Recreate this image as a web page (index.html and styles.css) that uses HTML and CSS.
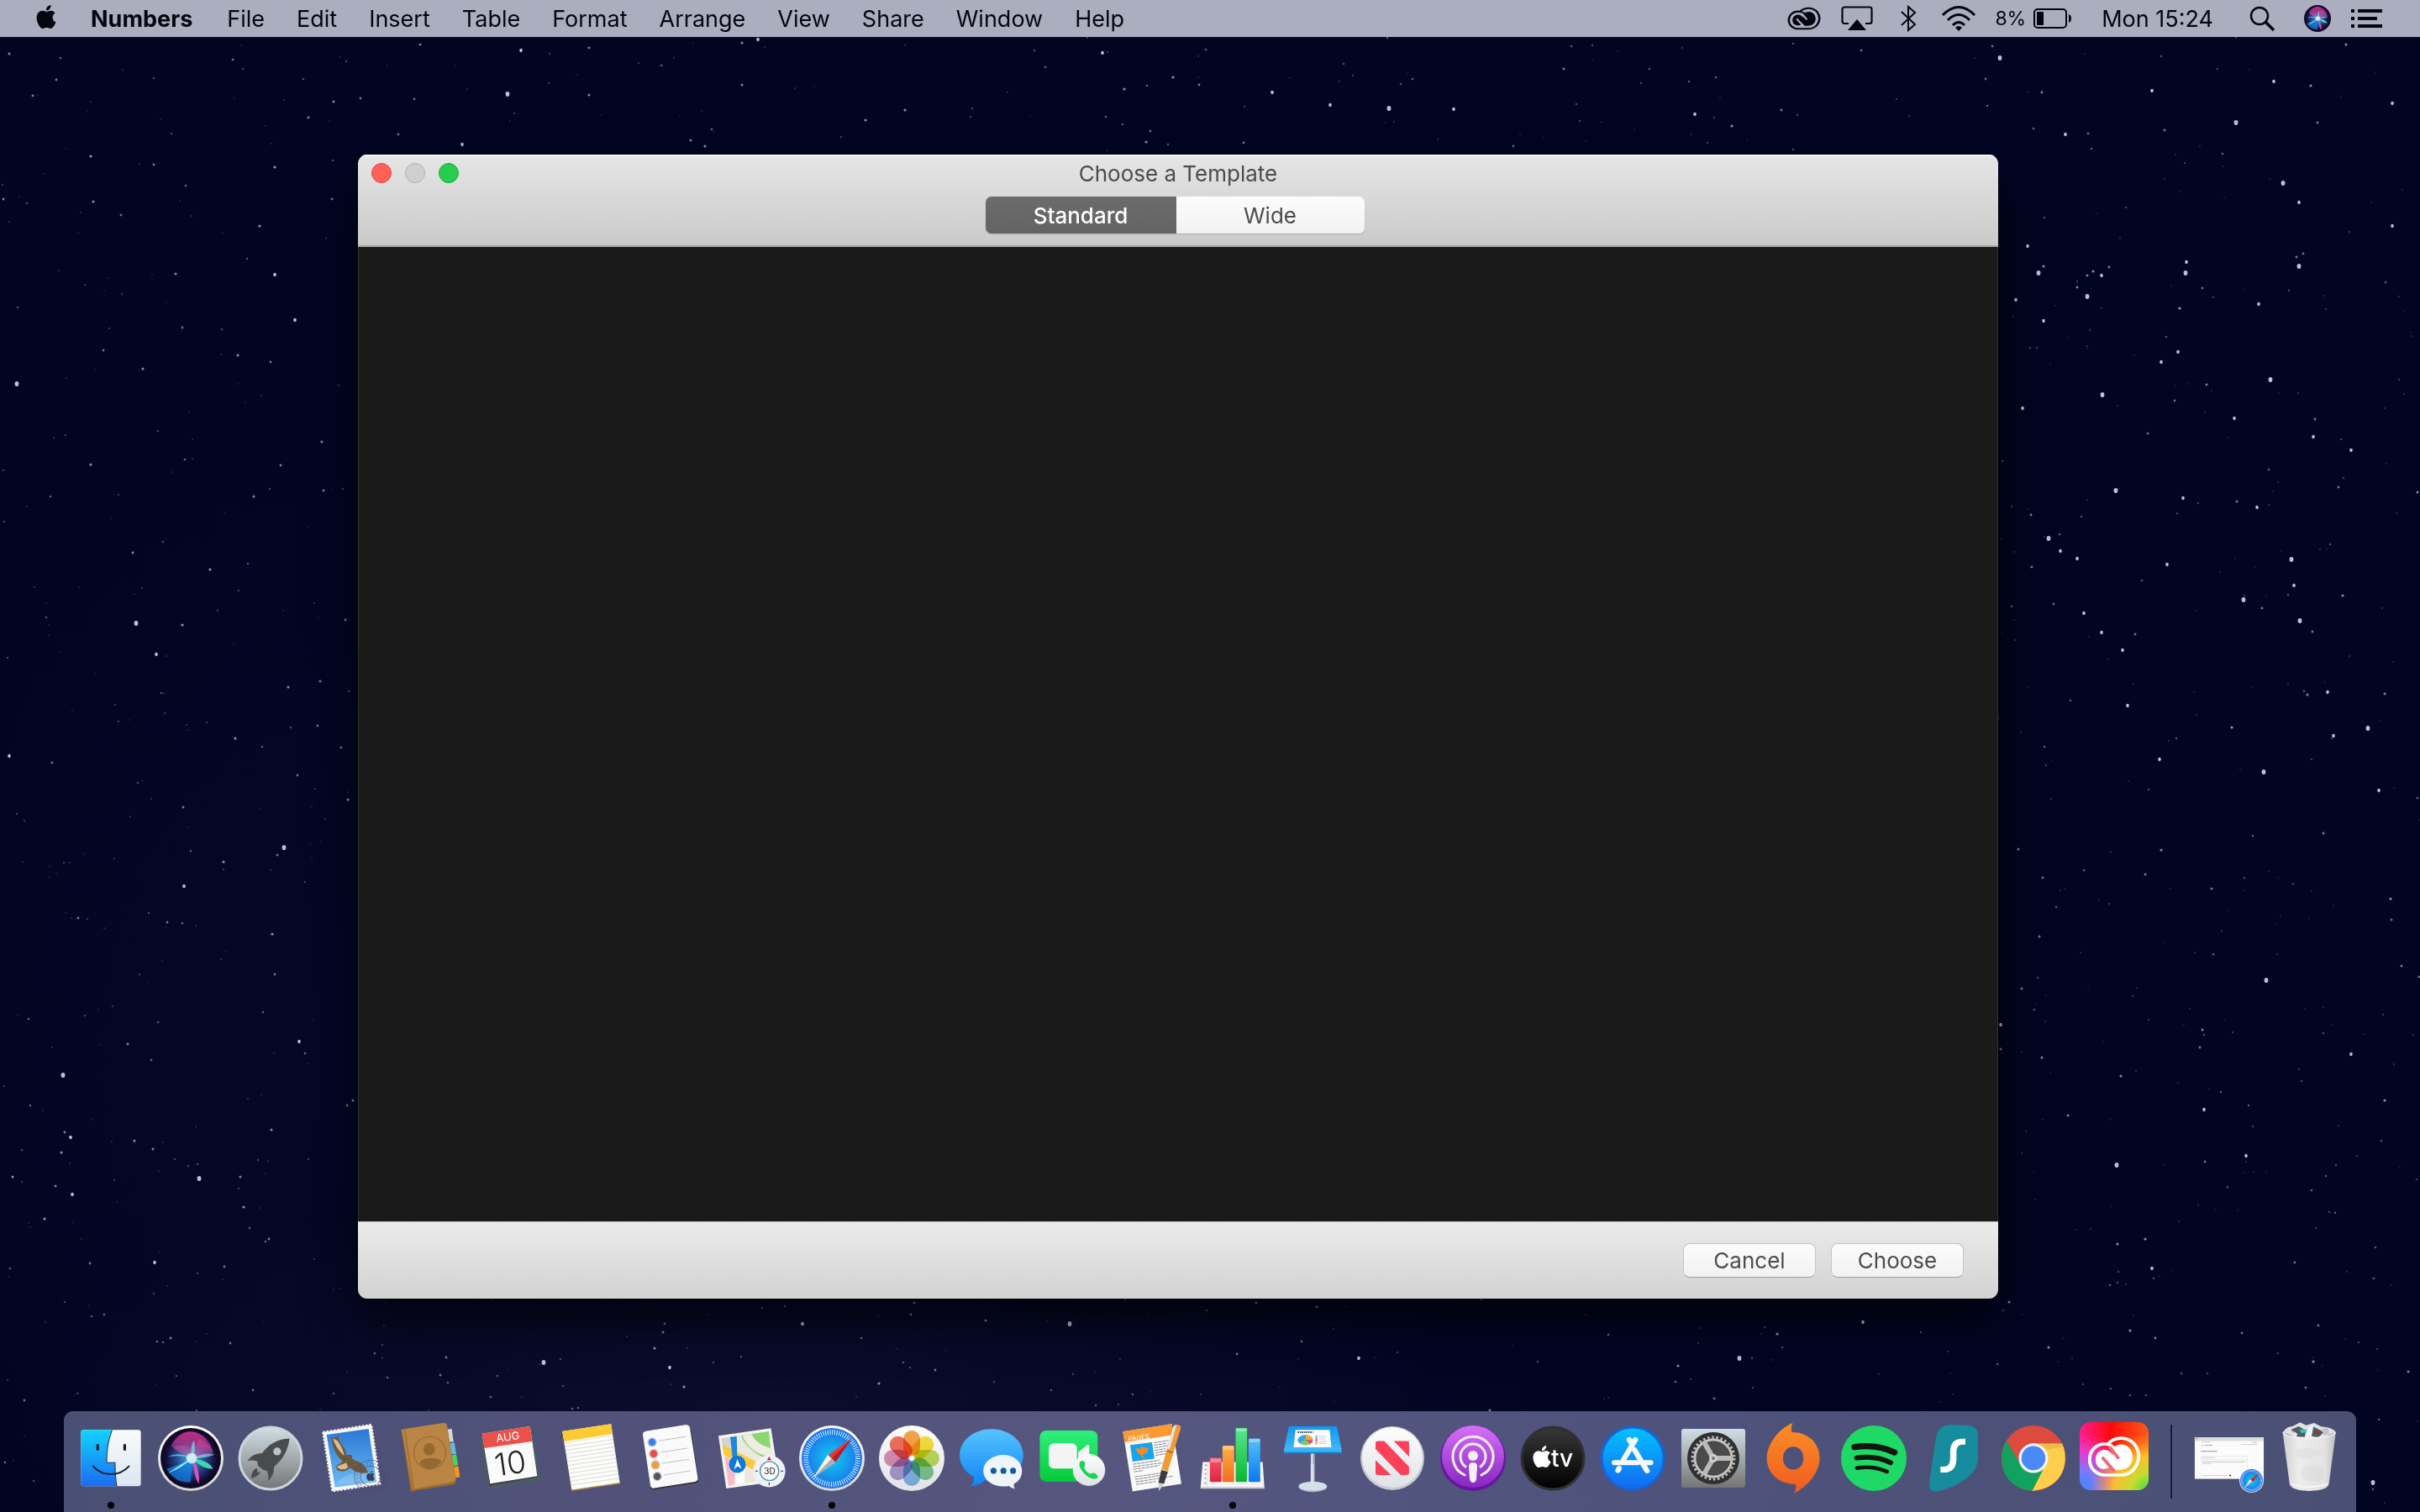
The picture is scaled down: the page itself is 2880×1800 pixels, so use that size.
FILE: index.html
```html
<!DOCTYPE html>
<html lang="en">
<head>
<meta charset="utf-8">
<title>Choose a Template</title>
<link rel="stylesheet" href="styles.css">
</head>
<body>
<svg class="defs" aria-hidden="true">
  <defs>
    <symbol id="apple" viewBox="0 0 24 24"><path fill="currentColor" d="M12.152 6.896c-.948 0-2.415-1.078-3.96-1.04-2.04.027-3.91 1.183-4.961 3.014-2.117 3.675-.546 9.103 1.519 12.09 1.013 1.454 2.208 3.09 3.792 3.039 1.52-.065 2.09-.987 3.935-.987 1.831 0 2.35.987 3.96.948 1.637-.026 2.676-1.48 3.676-2.948 1.156-1.688 1.636-3.325 1.662-3.415-.039-.013-3.182-1.221-3.22-4.857-.026-3.04 2.48-4.494 2.597-4.559-1.429-2.09-3.623-2.324-4.39-2.376-2-.156-3.675 1.09-4.61 1.09zM15.53 3.83c.843-1.012 1.4-2.427 1.245-3.83-1.207.052-2.662.805-3.532 1.818-.78.896-1.454 2.338-1.273 3.714 1.338.104 2.715-.688 3.559-1.701z"/></symbol>
    <symbol id="cloud" viewBox="515 116 180 150" preserveAspectRatio="none">
      <g fill="none" stroke="currentColor" stroke-width="11">
        <path d="M583 148C600 124 645 112 674 148C704 194 678 257 627 257H573C545 257 523 232 523 202C523 170 545 146 573 146C590 146 600 153 610 166"/>
      </g>
      <path fill="currentColor" d="M543 202C543 178 560 166 574 167C586 168 592 174 600 184L603 160C620 140 650 145 662 170C676 205 658 237 628 238H604C598 238 594 233 590 228C580 240 543 240 543 202Z"/>
      <g fill="none" stroke="var(--cut)" stroke-width="11" stroke-linecap="round">
        <path d="M592 160L618 195"/><path d="M568 197L603 240"/>
      </g>
    </symbol>
    <radialGradient id="siriBase"><stop offset="0" stop-color="#48b8e0"/><stop offset=".5" stop-color="#234a92"/><stop offset=".85" stop-color="#160f3c"/><stop offset="1" stop-color="#0d0822"/></radialGradient>
    <linearGradient id="siriTop" x2="0" y2="1"><stop offset="0" stop-color="#c62a86"/><stop offset=".6" stop-color="#b03a90" stop-opacity=".7"/><stop offset="1" stop-color="#7a3ab0" stop-opacity="0"/></linearGradient>
    <symbol id="siri" viewBox="-34 -34 68 68">
      <circle r="34" fill="#120824"/><circle r="32" fill="url(#siriBase)"/>
      <path d="M-22-14C-16-26-8-30 0-30S20-24 25-8C14 2-6-2-22-14Z" fill="url(#siriTop)"/>
      <path d="M-20-12C-8-18 4-12 4 0C-6-4-14-6-20-12ZM4 0C4-14 10-20 8-22C18-18 26-10 25-5Z" fill="#e8579d" opacity=".4"/>
      <path d="M-27 12Q-10 6 2 2L0 27Q-18 28-27 12Z" fill="#1480e0" opacity=".75"/>
      <path d="M-26 15Q-12 7 2 0Q-14-8-26-2Q-10-4 2 0Q-2-14 4-20Q6-10 3 0Q16-7 27-4Q18 0 3 0Z" fill="#9fe9f6" opacity=".6"/>
      <path d="M-26 17Q-12 8 2-1Q-8 10-26 17Z" fill="#8ff4ff"/>
      <path d="M3 1Q20 2 25 12Q12 12 3 1Z" fill="#3fd9a8"/><path d="M3 1Q11 16 9 29Q3 20 3 1Z" fill="#ea4fb5"/>
      <circle cx="1" r="6" fill="#e8fdff" opacity=".8"/>
    </symbol>
    <radialGradient id="safariBlue"><stop offset="0" stop-color="#12cdf0"/><stop offset="1" stop-color="#1b6fe8"/></radialGradient>
    <linearGradient id="rim" x2="0" y2="1"><stop offset="0" stop-color="#fff"/><stop offset="1" stop-color="#d4d4d6"/></linearGradient>
    <symbol id="safari" viewBox="-39 -39 78 78">
      <circle r="39" fill="url(#rim)"/><circle r="36" fill="url(#safariBlue)"/>
      <circle r="31" fill="none" stroke="#d8efff" stroke-width="6" stroke-dasharray="1 1.705"/>
      <path d="M24-24L4 5L-4-4Z" fill="#ee3434"/><path d="M24-24L4 5L0 0Z" fill="#b81d25"/>
      <path d="M-22 23L-5-4L4 5Z" fill="#f4f4f4"/><path d="M-22 23L0 0L4 5Z" fill="#a9adb2"/>
    </symbol>
    <linearGradient id="finderL" x2="0" y2="1"><stop offset="0" stop-color="#13d3fd"/><stop offset="1" stop-color="#1a6df2"/></linearGradient>
    <linearGradient id="finderR" x2="0" y2="1"><stop offset="0" stop-color="#fbfbfc"/><stop offset="1" stop-color="#dbe6f2"/></linearGradient>
    <linearGradient id="steel" x2="0" y2="1"><stop offset="0" stop-color="#cfdfe6"/><stop offset=".6" stop-color="#9ba0a2"/><stop offset="1" stop-color="#747474"/></linearGradient>
    <linearGradient id="sky" x2="0" y2="1"><stop offset="0" stop-color="#2a78d4"/><stop offset="1" stop-color="#6dbbf2"/></linearGradient>
    <linearGradient id="msg" x2="0" y2="1"><stop offset="0" stop-color="#57c4fb"/><stop offset="1" stop-color="#0f84fb"/></linearGradient>
    <linearGradient id="green" x2="0" y2="1"><stop offset="0" stop-color="#2ff07c"/><stop offset="1" stop-color="#06c93a"/></linearGradient>
    <linearGradient id="white" x2="0" y2="1"><stop offset="0" stop-color="#fdfdfd"/><stop offset="1" stop-color="#dfe2e6"/></linearGradient>
    <linearGradient id="barR" x2="0" y2="1"><stop offset="0" stop-color="#f5556a"/><stop offset="1" stop-color="#de2340"/></linearGradient>
    <linearGradient id="barO" x2="0" y2="1"><stop offset="0" stop-color="#fdb346"/><stop offset="1" stop-color="#f46a20"/></linearGradient>
    <linearGradient id="barG" x2="0" y2="1"><stop offset="0" stop-color="#5ae88e"/><stop offset="1" stop-color="#08b62f"/></linearGradient>
    <linearGradient id="barB" x2="0" y2="1"><stop offset="0" stop-color="#55c1fb"/><stop offset="1" stop-color="#0a78f0"/></linearGradient>
    <linearGradient id="key" x2="0" y2="1"><stop offset="0" stop-color="#1196f0"/><stop offset="1" stop-color="#3fb8fa"/></linearGradient>
    <linearGradient id="pod" x2="0" y2="1"><stop offset="0" stop-color="#d670f8"/><stop offset="1" stop-color="#8727c0"/></linearGradient>
    <linearGradient id="tv" x2="0" y2="1"><stop offset="0" stop-color="#383838"/><stop offset="1" stop-color="#000"/></linearGradient>
    <linearGradient id="store" x2="0" y2="1"><stop offset="0" stop-color="#04c3fd"/><stop offset="1" stop-color="#1368f3"/></linearGradient>
    <linearGradient id="origin" x2="0" y2="1"><stop offset="0" stop-color="#fa8f25"/><stop offset="1" stop-color="#f15a22"/></linearGradient>
    <linearGradient id="ccBase" x2="1" y2="0"><stop offset="0" stop-color="#ff1c92"/><stop offset=".45" stop-color="#fb0a0a"/><stop offset="1" stop-color="#ff5a1a"/></linearGradient>
    <radialGradient id="ccBlue" cx="0" cy="1" r=".85"><stop offset="0" stop-color="#2f8dff"/><stop offset=".35" stop-color="#7d78ff"/><stop offset=".7" stop-color="#e840e0" stop-opacity=".75"/><stop offset="1" stop-color="#ff30b0" stop-opacity="0"/></radialGradient>
    <radialGradient id="ccGreen" cx="1" cy="1" r=".85"><stop offset="0" stop-color="#3ddc4a"/><stop offset=".3" stop-color="#c8dc30"/><stop offset=".6" stop-color="#ffc926" stop-opacity=".9"/><stop offset="1" stop-color="#ff8a20" stop-opacity="0"/></radialGradient>
    <linearGradient id="bin" x2="1" y2="0"><stop offset="0" stop-color="#cfcfd1"/><stop offset=".3" stop-color="#ededee"/><stop offset=".8" stop-color="#e2e2e2"/><stop offset="1" stop-color="#bdbdc0"/></linearGradient>
  </defs>
</svg>

<svg class="sky" id="sky-field" viewBox="0 0 2880 1800" preserveAspectRatio="xMidYMid slice" aria-hidden="true"></svg>

<header class="menubar">
  <nav class="menus">
    <button class="menu" aria-label="Apple"><svg class="apple" width="28" height="32"><use href="#apple"/></svg></button>
    <button class="menu menu-app">Numbers</button>
    <button class="menu">File</button>
    <button class="menu">Edit</button>
    <button class="menu">Insert</button>
    <button class="menu">Table</button>
    <button class="menu">Format</button>
    <button class="menu">Arrange</button>
    <button class="menu">View</button>
    <button class="menu">Share</button>
    <button class="menu">Window</button>
    <button class="menu">Help</button>
  </nav>
  <div class="status">
    <button class="menu" aria-label="Creative Cloud"><svg class="cc-small" width="40" height="28"><use href="#cloud"/></svg></button>
    <button class="menu" aria-label="AirPlay"><svg width="38" height="32" viewBox="0 0 38 32"><path d="M9 22H4a2.500 2.500 0 0 1-2.500-2.500V5A2.500 2.500 0 0 1 4 2.500H34A2.500 2.500 0 0 1 36.500 5V19.500A2.500 2.500 0 0 1 34 22H29" fill="none" stroke="currentColor" stroke-width="2.200"/><path d="M19 17L30 30H8Z" fill="currentColor"/></svg></button>
    <button class="menu menu-bluetooth" aria-label="Bluetooth"><svg width="22" height="32" viewBox="0 0 22 32"><path d="M3 8L19 23L11 30V2L19 9L3 24" fill="none" stroke="currentColor" stroke-width="2"/></svg></button>
    <button class="menu" aria-label="Wi-Fi"><svg width="42" height="32" viewBox="0 0 42 32"><g fill="none" stroke="currentColor" stroke-width="3"><path d="M2 12Q21-7 40 12"/><path d="M8 18Q21 5 34 18"/><path d="M14 24Q21 17 28 24"/></g><path d="M17 27Q21 23 25 27L21 31Z" fill="currentColor"/></svg></button>
    <button class="menu menu-battery">8%<svg width="48" height="26" viewBox="0 0 48 26"><rect x="2" y="2" width="38" height="22" rx="4" fill="none" stroke="currentColor" stroke-width="2"/><rect x="5" y="5" width="8" height="16" rx="1" fill="currentColor"/><path d="M43 8Q46 9 46 13T43 18Z" fill="currentColor"/></svg></button>
    <button class="menu menu-clock">Mon 15:24</button>
    <button class="menu menu-search" aria-label="Search"><svg width="32" height="32" viewBox="0 0 32 32"><circle cx="12" cy="13" r="10" fill="none" stroke="currentColor" stroke-width="2.500"/><path d="M19 20L29 30" stroke="currentColor" stroke-width="3.500"/></svg></button>
    <button class="menu" aria-label="Siri"><svg width="32" height="32"><use href="#siri"/></svg></button>
    <button class="menu menu-list" aria-label="Notification Centre"><svg width="37" height="22" viewBox="0 0 37 22"><path d="M0 2H4M0 11H4M0 20H4M8 2H37M8 11H31M8 20H37" stroke="currentColor" stroke-width="4"/></svg></button>
  </div>
</header>

<main class="window">
  <header class="titlebar">
    <div class="lights">
      <button class="light light-close" aria-label="Close"></button>
      <button class="light light-off" aria-label="Minimise" disabled></button>
      <button class="light light-zoom" aria-label="Zoom"></button>
    </div>
    <h1 class="title">Choose a Template</h1>
    <div class="segments">
      <button class="segment segment-on" aria-pressed="true">Standard</button>
      <button class="segment" aria-pressed="false">Wide</button>
    </div>
  </header>
  <section class="gallery"></section>
  <footer class="actions">
    <button class="action">Cancel</button>
    <button class="action">Choose</button>
  </footer>
</main>

<nav class="dock">
  <button class="app app-open" aria-label="Finder"><svg viewBox="0 0 96 120"><g transform="matrix(.357 0 0 .333 -23.800 -10)"><rect x="101" y="97" width="200" height="201" rx="9" fill="url(#finderR)"/><path d="M205 97H110Q101 97 101 106V289Q101 298 110 298H221Q215 270 215 214H187Q186 150 205 97Z" fill="url(#finderL)"/><path d="M205 97Q186 150 187 214H215Q215 270 221 298" fill="none" stroke="#173b63" stroke-width="3"/><path d="M157 152V167M247 152V167" stroke="#15202c" stroke-width="9" stroke-linecap="round"/><path d="M142 227Q165 255 201 255T261 227" fill="none" stroke="#15202c" stroke-width="6" stroke-linecap="round"/></g></svg></button>
  <button class="app" aria-label="Siri"><svg viewBox="0 0 96 120"><circle cx="48" cy="56" r="39" fill="url(#rim)"/><use href="#siri" x="12" y="20" width="72" height="72"/></svg></button>
  <button class="app" aria-label="Launchpad"><svg viewBox="0 0 96 120"><circle cx="48" cy="56" r="37" fill="url(#steel)" stroke="#c9d6dc" stroke-width="3"/><g transform="matrix(.357 0 0 .333 -214 -10)"><path d="M797 128Q740 130 706 180Q672 182 657 207Q675 204 690 210L692 226L710 240L722 243Q730 262 724 280Q745 265 746 228Q790 190 797 128Z" fill="#484c4f"/><ellipse cx="756" cy="174" rx="13" ry="14" fill="#b9c3c8"/><path d="M689 233Q671 240 669 269Q692 265 701 246L690 250Z" fill="#484c4f"/></g></svg></button>
  <button class="app" aria-label="Mail"><svg viewBox="0 0 96 120"><g transform="matrix(.357 0 0 .333 -309.400 -10)"><path d="M907 105L1068 78L1097 290L938 316Z" fill="#f6f6f6" stroke="#f6f6f6" stroke-width="7" stroke-dasharray="7 5"/><path d="M919 114L1059 93L1085 283L947 302Z" fill="url(#sky)"/><path d="M935 122L948 124L958 118L960 135Q985 165 985 188Q1000 182 1005 192Q1000 200 1013 206Q1045 215 1058 249L1040 254Q1010 246 998 232Q980 252 954 240L950 225Q975 214 970 206Q940 180 935 122Z" fill="#70583f"/><path d="M940 128L955 135Q975 165 978 190Q950 165 940 128ZM952 228L985 214L990 232Q970 246 952 228Z" fill="#d9bd90"/><path d="M945 295Q990 235 1080 255L1083 281Z" fill="#b8dcf5" opacity=".3"/><g fill="none" stroke="#404a70" opacity=".6"><ellipse cx="1066" cy="262" rx="54" ry="57" stroke-width="3"/><ellipse cx="1066" cy="262" rx="34" ry="36" stroke-width="3"/><ellipse cx="1066" cy="262" rx="44" ry="46" stroke-width="8" stroke-dasharray="6 7" opacity=".5"/></g></g><use class="stamp" href="#apple" x="65" y="71" width="12" height="12"/></svg></button>
  <button class="app" aria-label="Contacts"><svg viewBox="0 0 96 120"><g transform="matrix(.357 0 0 .333 -404.700 -10)"><path d="M1323 95L1337 92L1343 140H1328Z" fill="#d4d6dc"/><path d="M1330 145L1346 142L1352 183H1336Z" fill="#58bfe9"/><path d="M1337 187L1352 184L1358 223L1340 227Z" fill="#49d35e"/><path d="M1342 230L1359 226L1364 266L1345 268Z" fill="#f2991c"/><path d="M1169 95L1310 72Q1319 71 1321 80L1351 278Q1352 290 1342 292L1200 317Z" fill="#9a6a2c"/><path d="M1169 95L1310 72Q1319 71 1321 80L1349 272Q1350 281 1342 283L1206 309Z" fill="#b98444"/><path d="M1180 94L1210 310" stroke="#93672f" stroke-width="3"/><ellipse cx="1264" cy="179" rx="53" ry="58" fill="#b98444" stroke="#936932" stroke-width="3"/><ellipse cx="1262" cy="166" rx="19" ry="22" fill="#936932"/><path d="M1229 218Q1232 198 1268 198Q1298 198 1303 210Q1268 258 1229 218Z" fill="#936932"/></g></svg></button>
  <button class="app" aria-label="Calendar"><svg viewBox="0 0 96 120"><g transform="matrix(.357 0 0 .333 -499 -10)"><path d="M1429 123L1602 92L1633 280L1454 310Z" fill="#4d5b66"/><path d="M1436 110L1590 86L1622 266L1461 298Z" fill="#3e444a"/><path d="M1436 110L1596 84L1620 262L1463 289Z" fill="#fbfbfb"/><path d="M1436 110L1596 84L1603 138L1444 162Z" fill="#ea5149"/></g><text class="cal-month" transform="translate(45 35) rotate(-8)">AUG</text><text class="cal-day" transform="translate(49 75) rotate(-8)">10</text></svg></button>
  <button class="app" aria-label="Notes"><svg viewBox="0 0 96 120"><g transform="matrix(.357 0 0 .333 -37 -10)"><path d="M141 102L303 76L333 290L172 315Z" fill="#a98638"/><path d="M141 102L303 76L332 285L172 311Z" fill="#fcfcfa"/><path d="M140 102L303 76L308 111L147 138Z" fill="#fccb34"/><path d="M148 143L308 116" stroke="#a59667" stroke-width="1.500" stroke-dasharray="3 3"/><path d="M150 157L310 131M152 170L312 144M154 183L314 158M156 197L316 171M158 210L318 185M160 224L320 199M162 238L322 213M164 252L324 227M166 266L326 241M168 280L328 255M170 294L330 270" stroke="#cbcbc8" stroke-width="2"/></g></svg></button>
  <button class="app" aria-label="Reminders"><svg viewBox="0 0 96 120"><g transform="matrix(.357 0 0 .333 -131.600 -10)"><path d="M407 110L433 301Q436 312 446 310L584 287Q595 284 593 275L568 92Z" fill="#2d2d31"/><path d="M418 101L549 79Q562 77 565 90L591 268Q593 279 582 282L447 305Q435 307 433 296L408 116Q406 104 418 101Z" fill="#fafafa"/><g stroke="#c9ccd0" stroke-width="4"><ellipse cx="439" cy="141" rx="14" ry="15" fill="#3880f2"/><ellipse cx="444" cy="182" rx="14" ry="15" fill="#ea4c43"/><ellipse cx="450" cy="222" rx="14" ry="15" fill="#f19b3b"/><ellipse cx="456" cy="263" rx="14" ry="15" fill="#54585e"/></g><path d="M461 136L551 121M467 177L557 162M472 217L563 202M478 258L568 243" stroke="#a7a7a9" stroke-width="2"/></g></svg></button>
  <button class="app" aria-label="Maps"><svg viewBox="0 0 96 120"><g transform="matrix(.357 0 0 .333 -226.900 -10)"><path d="M658 118L833 91L861 280L684 306Z" fill="#f6f4ef"/><path d="M667 127L826 102L850 272L691 296Z" fill="#ece8df"/><path d="M667 127L697 122L702 185L674 170Z" fill="#d6d4cc"/><path d="M734 117Q745 160 815 200L835 198L826 102Z" fill="#8ad670"/><path d="M738 117L768 112Q785 150 832 162L836 195Q760 180 738 117Z" fill="#efece4"/><path d="M672 150L780 208L784 245L676 186Z" fill="#fbc93a"/><path d="M680 190L712 210L710 293L692 296Z" fill="#f8b8c8"/><path d="M716 225L745 232V288H716Z" fill="#fff"/><path d="M697 122L719 119L721 205H706Z" fill="#2086dc"/><ellipse cx="721" cy="220" rx="28" ry="31" fill="#0c78da"/><path d="M721 201L735 236L722 227L710 238Z" fill="#fff"/><ellipse cx="827" cy="245" rx="54" ry="57" fill="#eef1f5"/><ellipse cx="828" cy="244" rx="31" ry="34" fill="#f7f9fa" stroke="#5d95a8" stroke-width="4"/><path d="M827 192L834 205H820Z" fill="#e8141c"/><path d="M781 244H789M866 244H874M827 285V294" stroke="#222" stroke-width="3"/></g><text class="map-mode" x="69" y="75">3D</text></svg></button>
  <button class="app app-open" aria-label="Safari"><svg viewBox="0 0 96 120"><use href="#safari" x="9" y="17" width="78" height="78"/></svg></button>
  <button class="app" aria-label="Photos"><svg viewBox="0 0 96 120"><circle cx="48" cy="56" r="39" fill="url(#white)"/><g class="petals" transform="translate(48 56)"><rect x="-10" y="-33" width="20" height="30" rx="10" fill="#f99a35"/><rect x="-10" y="-33" width="20" height="30" rx="10" fill="#f5dd28" transform="rotate(45)"/><rect x="-10" y="-33" width="20" height="30" rx="10" fill="#bbd84a" transform="rotate(90)"/><rect x="-10" y="-33" width="20" height="30" rx="10" fill="#72c585" transform="rotate(135)"/><rect x="-10" y="-33" width="20" height="30" rx="10" fill="#76b4e4" transform="rotate(180)"/><rect x="-10" y="-33" width="20" height="30" rx="10" fill="#a692cc" transform="rotate(225)"/><rect x="-10" y="-33" width="20" height="30" rx="10" fill="#d885ae" transform="rotate(270)"/><rect x="-10" y="-33" width="20" height="30" rx="10" fill="#f2604c" transform="rotate(315)"/></g><circle cx="48" cy="56" r="2" fill="#fff"/></svg></button>
  <button class="app" aria-label="Messages"><svg viewBox="0 0 96 120"><g transform="matrix(.357 0 0 .333 46.900 -10)"><path d="M0 94C-58 94-106 135-106 187C-106 220-88 248-60 264Q-55 285-70 298Q-40 296-24 278C50 286 106 245 106 187C106 135 58 94 0 94Z" fill="url(#msg)"/><path d="M40 186C5 186-27 210-27 243S5 299 40 299Q50 299 58 297Q66 305 78 308Q72 298 75 290Q102 274 102 243C102 210 74 186 40 186Z" fill="#eef4fb"/><g fill="#1259a5"><ellipse cx="7" cy="243" rx="10" ry="11"/><ellipse cx="40" cy="243" rx="10" ry="11"/><ellipse cx="72" cy="243" rx="10" ry="11"/></g></g></svg></button>
  <button class="app" aria-label="FaceTime"><svg viewBox="0 0 96 120"><g transform="matrix(.357 0 0 .333 -47.700 -10)"><rect x="160" y="99" width="193" height="183" rx="22" fill="url(#green)"/><rect x="190" y="145" width="94" height="90" rx="17" fill="#f3f4f3"/><path d="M288 177L318 151Q325 148 325 156V225L288 205Z" fill="#f3f4f3"/><ellipse cx="324" cy="240" rx="54" ry="57" fill="url(#white)"/><path d="M300 207C312 207 314 222 308 230C310 243 322 253 331 254C338 246 352 252 354 266C345 278 325 272 308 252C290 232 287 212 300 207Z" fill="#1ad553"/></g></svg></button>
  <button class="app" aria-label="Pages"><svg viewBox="0 0 96 120"><g transform="matrix(.357 0 0 .333 -143 -10)"><path d="M438 103L601 76L633 290L470 317Z" fill="#f9f9f9"/><path d="M438 103L601 76L607 115L444 141Z" fill="#fb9a30"/><path d="M462 151L535 141L543 200L470 210Z" fill="#17a3ee"/><path d="M480 160Q497 172 500 155Q510 165 524 160Q520 182 505 184L508 203L497 186Q484 180 480 160Z" fill="#f58b1d"/><path d="M541 143L590 135M542 152L585 145M544 161L590 153M545 170L580 164M546 179L585 172M547 188L580 182M471 220L560 205M472 229L570 214M473 238L560 224M475 247L505 242M478 265L590 247M479 274L560 260M481 283L605 262M482 292L550 281" stroke="#8b8b90" stroke-width="3" stroke-dasharray="12 2"/><path d="M606 84Q612 72 629 82L631 90L588 244L566 238Z" fill="#f39a35"/><path d="M606 84L586 164L594 166L616 80Z" fill="#dcecf5"/><path d="M586 172L604 178" stroke="#8c5a1e" stroke-width="4"/><path d="M566 240L588 246L575 290L556 286Z" fill="#3c3c40"/><path d="M556 286L574 291L558 315Z" fill="#c6d3dc"/></g><text class="pages-label" transform="translate(20 36) rotate(-8)">PAGES</text></svg></button>
  <button class="app app-open" aria-label="Numbers"><svg viewBox="0 0 96 120"><g transform="matrix(.357 0 0 .333 -238 -10)"><path d="M701 212H901L907 306H694Z" fill="#f5f5f7"/><path d="M694 301H907V307H694Z" fill="#c9c9cf"/><path d="M720 214L716 300" stroke="#d5d5da" stroke-width="2"/><path d="M709 223H715M708 239H714M708 254H714M707 270H713M706 287H713" stroke="#8a8a90" stroke-width="4"/><rect x="725" y="197" width="39" height="86" rx="4" fill="url(#barR)"/><rect x="767" y="153" width="39" height="130" rx="4" fill="url(#barO)"/><rect x="811" y="90" width="38" height="193" rx="4" fill="url(#barG)"/><rect x="854" y="128" width="39" height="155" rx="4" fill="url(#barB)"/><path d="M727 199H762V213H727ZM769 155H804V168H769ZM813 92H847V102H813ZM856 130H891V141H856Z" fill="#fff" opacity=".3"/></g></svg></button>
  <button class="app" aria-label="Keynote"><svg viewBox="0 0 96 120"><g transform="matrix(.357 0 0 .333 -333.600 -10)"><rect x="1063" y="176" width="13" height="124" fill="#d0d4de"/><path d="M1072 176H1077V298H1072Z" fill="#8d92a5"/><ellipse cx="1070" cy="300" rx="47" ry="19" fill="#a9b9cb"/><ellipse cx="1070" cy="298" rx="47" ry="16" fill="#d3e0ea"/><rect x="1063" y="220" width="10" height="78" fill="#dfe1e7"/><path d="M990 84H1150L1166 168H974Z" fill="url(#key)"/><path d="M974 168H1166V181H974Z" fill="#36b0f2"/><path d="M974 177H1166V181H974Z" fill="#0f6fc0"/><path d="M1012 97H1126L1132 159H1006Z" fill="#fafafa"/><ellipse cx="1045" cy="133" rx="25" ry="18" fill="#30a6f3"/><path d="M1045 133L1047 115Q1070 117 1070 133Z" fill="#f3ab30"/><path d="M1045 133H1070Q1068 145 1060 148Z" fill="#ee4b72"/><path d="M1045 133L1062 147Q1040 156 1024 143Z" fill="#77d353"/><path d="M1079 117H1085V127H1079Z" fill="#45c6ee"/><path d="M1079 127H1085V139H1079Z" fill="#ec55ac"/><path d="M1079 139H1085V150H1079Z" fill="#f4b63b"/><path d="M1089 120H1115M1089 129H1110M1089 138H1115M1089 146H1115" stroke="#c8ced8" stroke-width="3"/><path d="M1019 105H1070" stroke="#55606c" stroke-width="6" stroke-dasharray="5 2"/></g></svg></button>
  <button class="app" aria-label="News"><svg viewBox="0 0 96 120"><circle cx="48" cy="56" r="38" fill="#c5c9cf"/><circle cx="48" cy="55" r="36" fill="url(#white)"/><g transform="matrix(.357 0 0 .333 -429.700 -10)" fill="#fc4059"><path d="M1282 145Q1282 137 1290 137H1311L1394 229V250Q1394 258 1386 258H1366L1282 165Z"/><path d="M1343 137H1388Q1394 137 1394 144V193Z"/><path d="M1282 205L1334 258H1290Q1282 258 1282 250Z"/></g></svg></button>
  <button class="app" aria-label="Podcasts"><svg viewBox="0 0 96 120"><circle cx="48" cy="56" r="39" fill="#6417a0"/><circle cx="48" cy="54" r="37" fill="url(#pod)"/><g fill="none" stroke="#f6effa" stroke-width="3" stroke-linecap="round"><path d="M38 76A24 24 0 1 1 58 76"/><path d="M39 66A15 15 0 1 1 57 66"/></g><circle cx="48" cy="53" r="6" fill="#f6effa"/><path d="M43 66Q43 61 48 61T53 66L52 81Q51 85 48 85T44 81Z" fill="#f6effa"/></svg></button>
  <button class="app" aria-label="TV"><svg viewBox="0 0 96 120"><circle cx="48" cy="56" r="37" fill="url(#tv)" stroke="#303032" stroke-width="3"/><use class="tv-apple" href="#apple" x="22" y="41" width="26" height="26"/><text class="tv-label" x="46" y="66">tv</text></svg></button>
  <button class="app" aria-label="App Store"><svg viewBox="0 0 96 120"><circle cx="48" cy="56" r="37" fill="url(#store)" stroke="#1266dc" stroke-width="3"/><g transform="matrix(.357 0 0 .333 -156.200 -10)" stroke="#f4f8fc" stroke-width="18" stroke-linecap="round"><path d="M581 132L540 206M561 132L569 146M578 168L620 243M511 214H589M611 214H632M527 234L523 242"/></g></svg></button>
  <button class="app" aria-label="System Preferences"><svg viewBox="0 0 96 120"><rect x="10" y="21" width="76" height="70" rx="3" fill="url(#steel)"/><circle cx="48" cy="56" r="31" fill="#303032"/><circle cx="48" cy="56" r="22" fill="none" stroke="#c8c8c6" stroke-width="3"/><circle cx="48" cy="56" r="24" fill="none" stroke="#b9b9b7" stroke-width="5" stroke-dasharray="2.500 2.526"/><circle cx="48" cy="56" r="20" fill="#4a4a4a"/><g stroke="#babab8" stroke-width="6"><path d="M48 56H70M48 56L37 37M48 56L37 75"/></g><circle cx="48" cy="56" r="5" fill="#cfcfd0"/><circle cx="48" cy="56" r="2" fill="#777"/></svg></button>
  <button class="app" aria-label="Origin"><svg viewBox="0 0 96 120"><path transform="matrix(.357 0 0 .333 -346 -10)" fill-rule="evenodd" fill="url(#origin)" d="M1102 72Q1095 88 1099 105C1155 105 1192 145 1192 198C1192 250 1150 300 1106 324Q1116 308 1112 291C1055 291 1016 250 1016 198C1016 145 1060 90 1102 72ZM1104 157C1084 157 1070 175 1070 198S1084 239 1104 239S1138 221 1138 198S1124 157 1104 157Z"/></svg></button>
  <button class="app" aria-label="Spotify"><svg viewBox="0 0 96 120"><circle cx="48" cy="56" r="39" fill="#1ed965"/><g transform="matrix(.357 0 0 .333 -442 -10)" fill="none" stroke="#12160f" stroke-linecap="round"><path stroke-width="22" d="M1309 158Q1382 147 1441 177"/><path stroke-width="18" d="M1316 197Q1380 187 1428 214"/><path stroke-width="14" d="M1317 233Q1370 224 1416 246"/></g></svg></button>
  <button class="app" aria-label="Surfshark"><svg viewBox="0 0 96 120"><g transform="matrix(.357 0 0 .333 23 -10)"><path d="M10 130C15 95 30 80 60 79L115 80Q151 82 151 115V195C151 235 130 260 92 285C60 305 25 315 5 317C-12 315-12 295-10 280Z" fill="#178c9e"/><path d="M109 139H97Q69 141 69 175V200Q68 239 37 239H26" fill="none" stroke="#fff" stroke-width="21"/></g></svg></button>
  <button class="app" aria-label="Chrome"><svg viewBox="0 0 96 120"><g transform="matrix(.357 0 0 .333 -72 -10)"><ellipse cx="336" cy="198" rx="107" ry="117" fill="#dd4b3e"/><path d="M246 136C215 190 224 305 332 315L375 225L288 212Z" fill="#12a15f"/><path d="M336 146H432C455 200 445 305 332 315L382 210Z" fill="#ffce4d"/><path d="M336 146H432L436 158L383 168Z" fill="#d8a634" opacity=".4"/><ellipse cx="336" cy="198" rx="49" ry="53" fill="#f4f4f4"/><ellipse cx="336" cy="198" rx="40" ry="43" fill="#4a8af4"/></g></svg></button>
  <button class="app" aria-label="Creative Cloud"><svg class="cc-large" viewBox="0 0 96 120"><g><rect x="7" y="13" width="82" height="81" rx="13" fill="url(#ccBase)"/><rect x="7" y="13" width="82" height="81" rx="13" fill="url(#ccBlue)"/><rect x="7" y="13" width="82" height="81" rx="13" fill="url(#ccGreen)"/></g><use href="#cloud" x="16" y="29" width="64" height="50"/></svg></button>
  <span class="divider"></span>
  <button class="app" aria-label="Minimised window"><svg viewBox="0 0 96 120"><g transform="matrix(.357 0 0 .333 -305.800 -10)"><rect x="876" y="124" width="230" height="148" fill="#fbfbfb"/><path d="M876 124H1106V137H876Z" fill="#dcdcde"/><path d="M880 128H886" stroke="#ea6b62" stroke-width="3"/><path d="M900 140H927M1066 142H1085M1030 149H1085" stroke="#b9b9bd" stroke-width="2"/><path d="M908 152H935" stroke="#7eaee8" stroke-width="3"/><path d="M901 150V155" stroke="#e88" stroke-width="3"/><path d="M897 173H950" stroke="#9c9ca0" stroke-width="4" stroke-dasharray="5 1"/><path d="M897 191H1051V203H897ZM897 209H1051V255" fill="none" stroke="#e2e2e4" stroke-width="2"/><path d="M901 196H944M901 212H1043M901 218H930M901 260H985" stroke="#aaaaae" stroke-width="2" stroke-dasharray="4 1"/><path d="M991 260H997" stroke="#222" stroke-width="4"/></g><use href="#safari" x="60" y="68" width="29" height="29"/></svg></button>
  <button class="app" aria-label="Trash"><svg viewBox="0 0 96 120"><g transform="matrix(.357 0 0 .333 -401.800 -10)"><path d="M1172 106Q1185 84 1205 84L1230 70L1250 80L1277 72L1300 85Q1340 88 1349 106L1300 125H1220Z" fill="#dfe0e2"/><path d="M1200 96L1225 84L1250 100L1245 122H1220ZM1272 84L1310 105L1290 124L1262 118Z" fill="#555963"/><path d="M1228 97L1252 94L1250 106L1235 108Z" fill="#2ecbc6"/><path d="M1255 92L1276 74L1268 122H1250ZM1205 100L1222 112L1216 120Z" fill="#f5f5f5"/><path d="M1282 95L1300 104L1296 112L1278 108Z" fill="#7e4538"/><path d="M1300 96L1322 86L1327 108L1312 118Z" fill="#c5c5c9"/><path d="M1172 106C1190 132 1330 132 1349 106L1326 290Q1322 314 1260 315Q1200 314 1195 290Z" fill="url(#bin)"/><path d="M1172 106C1190 132 1330 132 1349 106" fill="none" stroke="#f7f7f8" stroke-width="4"/><path d="M1215 170Q1250 150 1300 175Q1270 210 1220 195ZM1240 230Q1280 215 1310 240L1300 280Q1250 290 1230 260Z" fill="#cdcccc" opacity=".25"/><path d="M1200 290Q1260 312 1322 290" fill="none" stroke="#fff" stroke-width="5" opacity=".7"/></g></svg></button>
</nav>
<script src="stars.js"></script>
</body>
</html>
```
FILE: styles.css
```css
* { box-sizing: border-box; }

html, body { height: 100%; }

body {
  margin: 0;
  display: flex;
  flex-direction: column;
  justify-content: space-between;
  overflow: hidden;
  position: relative;
  font-family: Inter, "Liberation Sans", sans-serif;
  background:
    radial-gradient(ellipse 900px 300px at 32% 94%, #17133680, #17133600),
    radial-gradient(ellipse 500px 700px at 14% 70%, #0b0b2c60, #0b0b2c00),
    #010522;
}

button {
  margin: 0;
  padding: 0;
  border: 0;
  background: none;
  font: inherit;
  color: inherit;
}

.defs { position: absolute; width: 0; height: 0; }

.sky { position: absolute; inset: 0; width: 100%; height: 100%; }

/* Menu bar */
.menubar {
  position: relative;
  display: flex;
  justify-content: space-between;
  height: 44px;
  padding: 0 45px 0 41px;
  background: #abaebf;
  color: #04050f;
  font-size: 27px;
}

.menus, .status { display: flex; align-items: center; }
.menus { gap: 38px; }
.status { gap: 28px; }
.menu { display: flex; align-items: center; height: 44px; }
.menu-app { margin: 0 3px 0 1px; font-weight: 700; }
.apple { margin-top: -4px; }
.cc-small { --cut: #abaebf; margin-right: -4px; }
.menu-bluetooth { margin-left: 3px; }
.menu-battery { gap: 8px; margin-left: -6px; font-size: 23px; }
.menu-clock { margin: 0 15px 0 6px; }
.menu-search { margin-right: 5px; }
.menu-list { margin-left: -4px; }

/* Template chooser */
.window {
  position: absolute;
  top: 184px;
  right: 502px;
  bottom: 254px;
  left: 426px;
  display: flex;
  flex-direction: column;
  overflow: hidden;
  border-radius: 11px;
  background: #1a1a1a;
  box-shadow: 0 24px 60px rgba(0, 0, 0, .7), 0 0 2px #000;
  color: #4c4c4c;
  font-size: 26px;
}

.titlebar {
  position: relative;
  display: flex;
  flex-direction: column;
  align-items: center;
  height: 110px;
  padding-top: 8px;
  border-bottom: 2px solid #a6a6a6;
  background: linear-gradient(#e6e6e6, #cacaca);
  box-shadow: inset 0 2px #f5f5f5;
}

.lights {
  position: absolute;
  top: 10px;
  left: 16px;
  display: flex;
  gap: 16px;
}

.light { width: 24px; height: 24px; border: 1px solid; border-radius: 50%; }
.light-close { background: #ff6058; border-color: #e2463f; }
.light-off { background: #cfcfcf; border-color: #b0b0b0; }
.light-zoom { background: #28cd4f; border-color: #16b13a; }

.title { margin: 0 0 12px; font-size: 26px; font-weight: 400; line-height: 30px; }

.segments {
  display: flex;
  margin-right: 8px;
  border-radius: 7px;
  box-shadow: 0 1px 1px #aaa;
}

.segment {
  width: 224px;
  height: 44px;
  border-radius: 0 7px 7px 0;
  background: linear-gradient(#fcfcfc, #f2f2f2);
}

.segment-on {
  width: 227px;
  border-radius: 7px 0 0 7px;
  background: linear-gradient(#6c6c6c, #636363);
  color: #fff;
  font-weight: 500;
}

.gallery { flex: 1; border: solid #333; border-width: 0 1px; }

.actions {
  display: flex;
  align-items: center;
  justify-content: flex-end;
  gap: 18px;
  height: 92px;
  padding-right: 41px;
  border-top: 1px solid #c4c4c4;
  background: linear-gradient(#ebebeb, #d2d2d2);
}

.action {
  width: 158px;
  height: 41px;
  border: 1px solid #c6c6c6;
  border-bottom-color: #a2a2a2;
  border-radius: 8px;
  background: linear-gradient(#fcfcfc, #f2f2f2);
}

/* Dock */
.dock {
  position: relative;
  display: grid;
  grid-template-columns: repeat(26, 1fr) 42px repeat(2, 1fr);
  height: 120px;
  margin: 0 76px;
  padding: 0 8px;
  border-radius: 11px 11px 0 0;
  background: linear-gradient(90deg, #4a5074, #51527a 25%, #55577f 45%, #4f527b 70%, #4a5074);
}

.app { position: relative; display: flex; justify-content: center; min-width: 0; }
.app svg { flex: none; width: 96px; height: 120px; }

.app-open::after {
  content: "";
  position: absolute;
  bottom: 4px;
  left: calc(50% - 4px);
  width: 8px;
  height: 8px;
  border-radius: 50%;
  background: #000;
}

.divider { width: 2px; height: 88px; margin: 16px auto; background: #161a42; }

.cc-large { color: #fff; --cut: #ee6a78; }
.stamp { color: #34405c; }
.tv-apple { color: #fff; }
.tv-label { font-size: 28px; font-weight: 500; fill: #fff; }
.cal-month { font-size: 13px; text-anchor: middle; fill: #fff; }
.cal-day { font-size: 37px; font-weight: 300; text-anchor: middle; fill: #222; }
.map-mode { font-size: 10px; text-anchor: middle; fill: #222; }
.pages-label { font-size: 8px; fill: #fff; }
.petals rect { mix-blend-mode: multiply; opacity: .9; }
```
FILE: stars.js
```js
// Night sky: placed bright stars plus an even, seeded scatter of faint ones.
const bright = [
  [2380,69],[2561,108],[2706,97],[2661,146],[2458,160],[2847,123],[2717,218],[2736,241],[2847,269],
  [2426,325],[2413,293],[2501,328],[2484,353],[2399,357],[2432,382],[2601,325],[2602,312],[2688,362],
  [2736,317],[2572,431],[2592,419],[2702,452],[2659,498],[2407,486],[2502,470],[2753,520],[2798,536],
  [2518,584],[2598,593],[2686,604],[2438,641],[2452,656],[2472,665],[2727,666],[2730,697],[2579,672],
  [2670,714],[2480,730],[2501,753],[2737,739],[2526,774],[2770,824],[2818,867],[2570,904],[2777,876],
  [2694,919],[2532,840],[2831,941],[604,112],[1514,110],[2017,136],[1653,129],[1730,130],[1583,125],
  [20,457],[327,327],[351,381],[162,742],[186,779],[2381,1220],[2697,1167],[2623,1321],[2673,1376],
  [2519,1387],[2798,1255],[2561,1510],[75,1280],[86,1422],[84,1354],[237,1403],[184,1503],[356,1240],
  [338,1009],[219,1055],[11,900],[647,1622],[797,1628],[1617,1617],[2070,1617],[2217,1574],[955,1576],
  [1273,1576],[550,172],[902,47],[2824,1765],[620,60],[1312,63]
];
const field = document.getElementById("sky-field");

function star(x, y, rx, ry, opacity, fill) {
  const dot = document.createElementNS("http://www.w3.org/2000/svg", "ellipse");
  dot.setAttribute("cx", x);
  dot.setAttribute("cy", y);
  dot.setAttribute("rx", rx);
  dot.setAttribute("ry", ry);
  dot.setAttribute("opacity", opacity);
  dot.setAttribute("fill", fill);
  field.appendChild(dot);
}

let seed = 7;
function random() {
  seed = (seed * 16807) % 2147483647;
  return seed / 2147483647;
}

for (let i = 0; i < 2000; i++) {
  const level = random() ** 2;
  const r = 1 + level * 0.6;
  star(Math.round(random() * 2880), Math.round(random() * 1800), r, r, 0.15 + level * 0.65, "#b8bce0");
}
bright.forEach(([x, y], i) => {
  const r = i % 3 ? 1.8 : 2.4;
  star(x, y, r, r * 1.2, 0.85, "#dfe0f2");
});
```
